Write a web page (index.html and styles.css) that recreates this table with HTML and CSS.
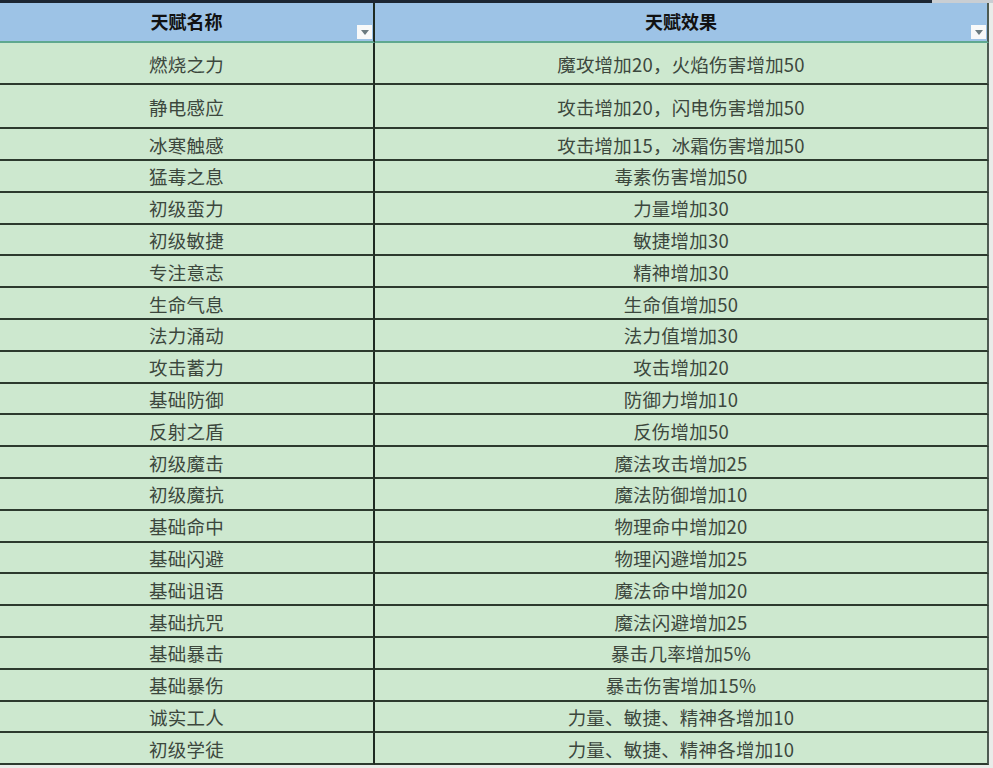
FILE: index.html
```html
<!DOCTYPE html>
<html lang="zh">
<head>
<meta charset="utf-8">
<link rel="stylesheet" href="styles.css">
</head>
<body>
<div class="topbar"><div class="topbar-dark"></div><div class="topbar-light"></div></div>
<div class="sheet">
  <div class="hcell c1">天赋名称<span class="drop"><svg width="8" height="5" viewBox="0 0 8 5"><path d="M0 0H8L4 5Z" fill="#6b7a7f"/></svg></span></div>
  <div class="hcell c2">天赋效果<span class="drop"><svg width="8" height="5" viewBox="0 0 8 5"><path d="M0 0H8L4 5Z" fill="#6b7a7f"/></svg></span></div>

  <div class="cell c1">燃烧之力</div><div class="cell c2">魔攻增加20，火焰伤害增加50</div>
  <div class="cell c1">静电感应</div><div class="cell c2">攻击增加20，闪电伤害增加50</div>
  <div class="cell c1">冰寒触感</div><div class="cell c2">攻击增加15，冰霜伤害增加50</div>
  <div class="cell c1">猛毒之息</div><div class="cell c2">毒素伤害增加50</div>
  <div class="cell c1">初级蛮力</div><div class="cell c2">力量增加30</div>
  <div class="cell c1">初级敏捷</div><div class="cell c2">敏捷增加30</div>
  <div class="cell c1">专注意志</div><div class="cell c2">精神增加30</div>
  <div class="cell c1">生命气息</div><div class="cell c2">生命值增加50</div>
  <div class="cell c1">法力涌动</div><div class="cell c2">法力值增加30</div>
  <div class="cell c1">攻击蓄力</div><div class="cell c2">攻击增加20</div>
  <div class="cell c1">基础防御</div><div class="cell c2">防御力增加10</div>
  <div class="cell c1">反射之盾</div><div class="cell c2">反伤增加50</div>
  <div class="cell c1">初级魔击</div><div class="cell c2">魔法攻击增加25</div>
  <div class="cell c1">初级魔抗</div><div class="cell c2">魔法防御增加10</div>
  <div class="cell c1">基础命中</div><div class="cell c2">物理命中增加20</div>
  <div class="cell c1">基础闪避</div><div class="cell c2">物理闪避增加25</div>
  <div class="cell c1">基础诅语</div><div class="cell c2">魔法命中增加20</div>
  <div class="cell c1">基础抗咒</div><div class="cell c2">魔法闪避增加25</div>
  <div class="cell c1">基础暴击</div><div class="cell c2">暴击几率增加5%</div>
  <div class="cell c1">基础暴伤</div><div class="cell c2">暴击伤害增加15%</div>
  <div class="cell c1">诚实工人</div><div class="cell c2">力量、敏捷、精神各增加10</div>
  <div class="cell c1">初级学徒</div><div class="cell c2">力量、敏捷、精神各增加10</div>
</div>
</body>
</html>
```
FILE: styles.css
```css
html, body {
  margin: 0;
  padding: 0;
  background: #e9ece9;
  width: 993px;
  height: 768px;
  overflow: hidden;
}
.topbar {
  display: flex;
  height: 3px;
}
.topbar-dark {
  width: 932px;
  background: #1c2633;
}
.topbar-light {
  flex: 1;
  background: #c9ced3;
}
.sheet {
  display: grid;
  grid-template-columns: 375px 614px;
  grid-template-rows: 40px 42px 44px 32px repeat(19, 31.8px);
  width: 989px;
  font-family: "Noto Sans CJK SC", "Liberation Sans", sans-serif;
}
.hcell {
  position: relative;
  background: #9dc3e6;
  border-bottom: 2px solid #5fa890;
  display: flex;
  align-items: center;
  justify-content: center;
  font-size: 18px;
  font-weight: 700;
  color: #111;
  padding-bottom: 2px;
  box-sizing: border-box;
}
.hcell.c1 {
  border-right: 2px solid #1e2a22;
}
.hcell.c2 {
  border-right: 2px solid #4d5a52;
}
.drop {
  position: absolute;
  right: 1px;
  bottom: 2px;
  width: 15px;
  height: 14px;
  background: #f8f9f9;
  display: flex;
  align-items: center;
  justify-content: center;
}
.cell {
  background: #cde8cf;
  border-bottom: 2px solid #2c3a2e;
  display: flex;
  align-items: center;
  justify-content: center;
  font-size: 18.5px;
  color: #3c473d;
  box-sizing: border-box;
  padding-top: 1px;
  letter-spacing: 0.2px;
}
.cell.c1 {
  border-right: 2px solid #1e2a22;
}
.cell.c2 {
  border-right: 2px solid #4d5a52;
}
```
